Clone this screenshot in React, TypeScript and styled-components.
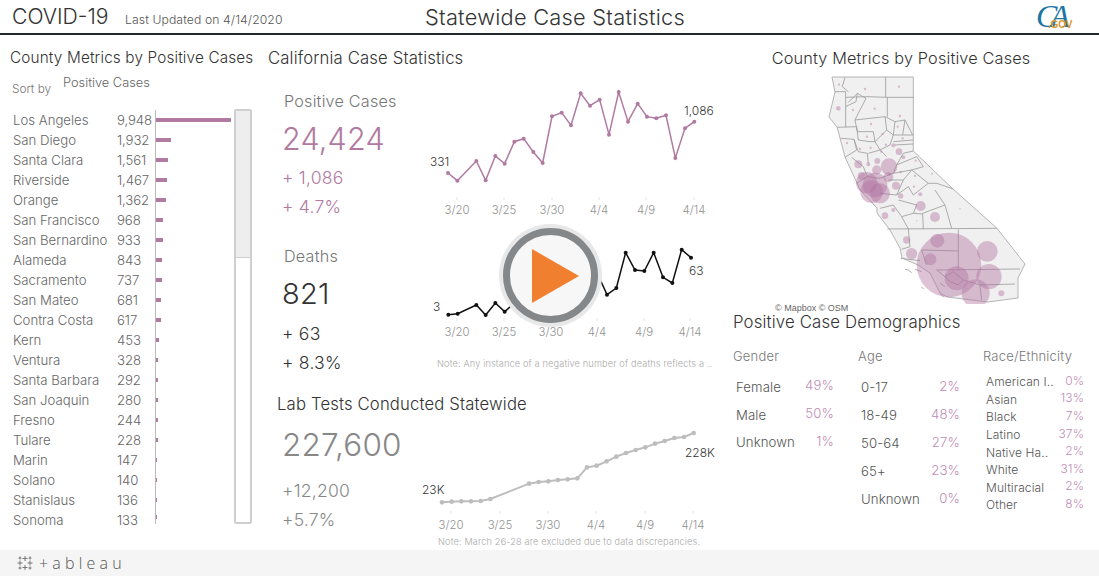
import React from "react";
import styled, { createGlobalStyle } from "styled-components";

const Global = createGlobalStyle`
  html, body { margin: 0; padding: 0; background: #fff; }
  body { font-family: "Inter", "Open Sans", sans-serif; font-weight: 300; color: #444; overflow: hidden; }
`;

const PURPLE = "#b07aa1";
const counties: [string, number][] = [
  ["Los Angeles", 9948], ["San Diego", 1932], ["Santa Clara", 1561], ["Riverside", 1467], ["Orange", 1362],
  ["San Francisco", 968], ["San Bernardino", 933], ["Alameda", 843], ["Sacramento", 737], ["San Mateo", 681],
  ["Contra Costa", 617], ["Kern", 453], ["Ventura", 328], ["Santa Barbara", 292], ["San Joaquin", 280],
  ["Fresno", 244], ["Tulare", 228], ["Marin", 147], ["Solano", 140], ["Stanislaus", 136], ["Sonoma", 133],
];

const Page = styled.div`
  position: relative; width: 1099px; height: 576px; display: flex; flex-direction: column; overflow: hidden;
`;
const Header = styled.header`
  height: 33px; border-bottom: 2px solid #23262b; display: flex; align-items: center; padding-left: 12px;
`;
const Brand = styled.h1`
  margin: 0; width: 113px; font-size: 21.2px; font-weight: 300; color: #333; line-height: 33px;
`;
const Updated = styled.span`
  font-size: 12.2px; color: #555; padding-top: 6px; width: 265px; letter-spacing: 0.1px; white-space: nowrap;
`;
const PageTitle = styled.h2`
  margin: 0; width: 330px; text-align: center; font-size: 21.8px; font-weight: 300; color: #333; letter-spacing: 0.25px; white-space: nowrap;
`;
const Logo = styled.div`
  margin-left: 315px; width: 42px; height: 33px; position: relative; font-family: "Liberation Serif", serif;
`;
const LogoCA = styled.span`
  position: absolute; left: 1px; top: 0; font-size: 32px; line-height: 33px; font-style: italic; color: #1c75a3; letter-spacing: -7px;
`;
const LogoGov = styled.span`
  position: absolute; left: 13px; top: 20px; font-family: "Liberation Sans", sans-serif; font-size: 10px; line-height: 9px; font-weight: 700; color: #dc962e; letter-spacing: -0.2px;
`;
const Body = styled.main`
  flex: 1; display: grid; grid-template-columns: 268px 452px 379px; min-height: 0;
`;
const Footer = styled.footer`
  height: 26px; background: #f5f5f5; display: flex; align-items: center; padding-left: 17px; gap: 6px;
`;
const FooterText = styled.span`
  font-size: 16px; letter-spacing: 4.2px; line-height: 26px; font-weight: 300; color: #555; font-family: "Open Sans", sans-serif;
`;
const SectionTitle = styled.h3<{ $inset?: number; $center?: boolean; $size: number }>`
  margin: 0; height: 18px; line-height: 18px; font-size: ${(p) => p.$size}px; font-weight: 300; color: #333; white-space: nowrap;
  padding-left: ${(p) => p.$inset ?? 0}px; text-align: ${(p) => (p.$center ? "center" : "left")}; letter-spacing: 0.15px;
`;
const LeftCol = styled.section`
  padding: 14px 0 0 10px; min-width: 0;
`;
const SortRow = styled.div`
  height: 34px; margin-top: 8px; display: flex; padding-left: 2px; gap: 12px;
`;
const SortLabel = styled.span`
  font-size: 11.8px; color: #777; line-height: 16px; margin-top: 6px; width: 39px; white-space: nowrap;
`;
const SortValue = styled.span`
  font-size: 12.8px; color: #666; line-height: 16px; white-space: nowrap;
`;
const ListWrap = styled.div`
  display: flex; height: 415px;
`;
const List = styled.div`
  width: 224px; height: 415px; padding-top: 1px; box-sizing: border-box;
`;
const Row = styled.div`
  display: grid; grid-template-columns: 104px 38px 1fr; height: 20px; line-height: 20px; padding-left: 3px; font-size: 13.2px; color: #666; white-space: nowrap;
  &:last-child > div { height: 14px; }
`;
const Num = styled.span`
  letter-spacing: -0.1px;
`;
const BarCell = styled.div`
  border-left: 1px solid #bbb; display: flex; align-items: center; height: 20px;
`;
const Bar = styled.div`
  height: 4.5px; background: ${PURPLE};
`;
const Scroll = styled.div`
  width: 18px; height: 415px; box-sizing: border-box; border: 2px solid #cfcfcf; border-radius: 2px;
`;
const Thumb = styled.div`
  height: 146px; background: #eeeeee; border-bottom: 1px solid #cfcfcf;
`;
const MidCol = styled.section`
  padding-top: 14px; min-width: 0; display: flex; flex-direction: column;
`;
const ChartRow = styled.div<{ $h: number; $mt?: number }>`
  display: grid; grid-template-columns: 152px 300px; height: ${(p) => p.$h}px; margin-top: ${(p) => p.$mt ?? 0}px;
`;
const Kpi = styled.div<{ $pt: number; $pl: number }>`
  padding: ${(p) => p.$pt}px 0 0 ${(p) => p.$pl}px;
`;
const KpiLabel = styled.div`
  font-size: 16.2px; line-height: 20px; color: #777; letter-spacing: 0.2px; white-space: nowrap; padding-left: 2px;
`;
const KpiValue = styled.div<{ $color: string; $mt: number; $size: number }>`
  font-size: ${(p) => p.$size}px; line-height: 40px; color: ${(p) => p.$color}; margin-top: ${(p) => p.$mt}px; letter-spacing: 0.2px;
`;
const KpiDelta = styled.div<{ $color: string; $mt?: number }>`
  font-size: 17.6px; line-height: 29px; color: ${(p) => p.$color}; margin-top: ${(p) => p.$mt ?? 0}px; letter-spacing: 0.2px;
`;
const ChartCol = styled.div`
  display: flex; flex-direction: column;
`;
const ChartSvg = styled.svg`
  display: block; width: 300px; flex: none;
`;
const Note = styled.div<{ $mt: number; $pl: number }>`
  font-size: 9.2px; line-height: 14px; color: #aaa; margin-top: ${(p) => p.$mt}px; padding-left: ${(p) => p.$pl}px; white-space: nowrap; letter-spacing: 0.14px;
`;
const RightCol = styled.section`
  padding-top: 14px; min-width: 0;
`;
const MapSvg = styled.svg`
  display: block; width: 260px; height: 234px; margin: 3px 0 0 60px;
`;
const Attribution = styled.div`
  height: 9px; margin-left: 55px; font: 400 9px/9px "Liberation Sans", sans-serif; color: #666;
`;
const DemoGrid = styled.div`
  margin: 17px 0 0 13px; display: grid; grid-template-columns: 125px 125px 101px;
`;
const DemoHead = styled.div`
  font-size: 13px; line-height: 16px; color: #777; margin-bottom: 9px; letter-spacing: 0.2px; white-space: nowrap;
`;
const DemoRow = styled.div<{ $h: number; $small?: boolean; $w: number }>`
  display: flex; justify-content: space-between; align-items: center; height: ${(p) => p.$h}px; padding-left: 3px; width: ${(p) => p.$w}px;
  font-size: ${(p) => (p.$small ? 12 : 13.2)}px; color: #555; white-space: nowrap; letter-spacing: 0.1px;
`;
const Pct = styled.span`
  color: #c08db5; padding-bottom: 3px;
`;
const Play = styled.div`
  position: absolute; left: 499px; top: 224px; width: 103px; height: 103px; border-radius: 50%; background: #e8e8e8; display: flex; align-items: center; justify-content: center;
`;
const PlayRing = styled.div`
  width: 81px; height: 81px; border-radius: 50%; border: 7px solid #85888b; background: #f7f7f7; display: flex; align-items: center; justify-content: center;
`;

type Pt = [number, number];
const conv = (pts: Pt[], ox: number, oy: number): Pt[] => pts.map(([x, y]) => [x / 3 + ox, y / 3 + oy]);
const toStr = (pts: Pt[]) => pts.map((p) => p.join(",")).join(" ");

const posPts = conv([[84,309],[112,332],[169,273],[197,331],[226,258],[254,281],[283,215],[311,206],[340,246],[368,279],[396,139],[425,128],[453,166],[482,70],[510,107],[539,89],[567,194],[596,66],[624,155],[653,101],[681,140],[709,145],[738,136],[766,264],[795,175],[823,155]], 420, 70);
const deathPts = conv([[85,284],[113,281],[169,255],[197,285],[226,249],[254,275],[282,250],[310,260],[338,240],[366,220],[394,230],[422,200],[450,210],[478,190],[506,160],[534,165],[561,224],[589,204],[617,98],[645,150],[673,153],[701,98],[729,172],[757,189],[785,89],[813,113]], 420, 220);
const testPts = conv([[66,244],[95,242],[124,241],[153,241],[182,240],[211,234],[327,188],[356,183],[385,181],[414,177],[443,175],[472,172],[501,139],[530,134],[560,121],[589,107],[618,96],[647,87],[676,79],[705,68],[734,60],[763,51],[792,48],[821,36]], 420, 420);

const dates = ["3/20", "3/25", "3/30", "4/4", "4/9", "4/14"];

function LineChart(props: {
  vb: string; h: number; pts: Pt[]; color: string; sw: number; r: number; tickX: number[]; tickY: number; labelY: number;
  values: { x: number; y: number; t: string }[];
}) {
  return (
    <ChartSvg viewBox={props.vb} height={props.h} style={{ height: props.h }}>
      <polyline points={toStr(props.pts)} fill="none" stroke={props.color} strokeWidth={props.sw} />
      {props.pts.map((p, i) => <circle key={i} cx={p[0]} cy={p[1]} r={props.r} fill={props.color} />)}
      {props.tickX.map((x, i) => (
        <g key={i}>
          <line x1={x} x2={x} y1={props.tickY} y2={props.tickY + 3} stroke="#e3e3e3" />
          <text x={x} y={props.labelY} textAnchor="middle" fontSize="11.4" fill="#929292" fontFamily="Inter, sans-serif" fontWeight="300">{dates[i]}</text>
        </g>
      ))}
      {props.values.map((v) => (
        <text key={v.t} x={v.x} y={v.y} fontSize="12" fill="#333" fontFamily="Inter, sans-serif" fontWeight="300">{v.t}</text>
      ))}
    </ChartSvg>
  );
}

const smallDots: Pt[] = [[177,44],[255,57],[357,50],[219,120],[284,116],[360,138],[273,162],[353,170],[308,192],[261,200],[368,205],[201,219],[318,224],[240,237],[272,234],[304,245],[407,272],[362,306],[405,318],[402,350],[328,313]];
const bubbles4: [number, number, number][] = [[175,115,7],[340,226,6],[357,245,10],[370,262,6],[235,283,12],[265,283,6],[292,273,9],[327,290,25],[290,300,14],[325,322,15],[245,318,12],[260,338,32],[285,345,37],[275,365,34],[300,370,30],[348,347,12],[362,378,8],[421,373,6],[456,311,3]];
const bubbles5: [number, number, number][] = [[507,225,97],[622,184,31],[627,260,38],[587,310,42],[530,265,36],[451,208,18],[472,152,21],[395,191,17],[380,150,11],[465,81,15],[422,48,15],[315,77,10],[664,310,9],[540,56,2],[410,92,2],[340,60,6]];

const linesZ4 = [
  "317,20 317,82", "197,82 260,80 322,82 400,82", "195,22 187,50 205,65", "165,65 197,65 197,172",
  "205,97 232,70 258,85", "232,70 228,95 197,110", "322,82 322,140", "225,150 315,140 345,155 375,150 398,195",
  "172,172 230,170 235,210", "232,185 280,185 285,215 320,180 315,140", "235,210 270,215 285,215 300,240", "225,150 232,185",
  "340,195 400,195", "340,195 330,225 300,240", "340,215 400,210", "345,225 400,222", "400,243 370,250 350,285",
  "182,205 222,208 230,240 195,262", "222,208 235,245 262,250 265,280", "265,250 300,240 320,260",
  "350,285 410,260", "410,260 430,290 395,300 370,330", "395,300 445,340 400,375 385,350 350,375", "445,340 470,340 520,357",
  "230,340 262,320 300,325 340,310 350,285", "262,320 250,290 215,262", "340,310 395,300",
  "300,370 350,375 370,330 325,330", "258,85 240,120 225,150", "345,155 340,195", "320,180 340,195", "375,150 368,195",
];
const linesZ5 = [
  "322,117 650,115", "535,118 535,235", "425,180 535,183", "470,240 720,237", "600,285 705,282", "600,285 605,330",
  "430,118 428,70 495,45 515,115", "400,70 428,72", "300,55 340,45 365,80 385,117", "365,80 400,70 410,45 355,30", "495,45 465,0",
  "385,117 390,170 365,178", "425,180 440,225", "362,205 420,212", "495,260 520,245 550,270 535,285 510,275 495,260", "470,240 495,260", "550,270 600,285",
  "375,238 385,240 395,248", "405,238 425,245", "424,292 431,296", "480,280 495,290", "480,310 492,322",
];
const outline = "M832 77 L913.3 77 L913.3 151 L953 189 L996.7 228 L1025 264 L1018 278 L1018 298 L988 302 L947 297 L940 293 L930 273 L918 265 L902 258 L900 248 L890 230 L877 213 L877 208 L860 190 L857 183 L845 157 L840 138 L837 127 L829 117 L835 92 Z";

const CaMap = () => (
  <MapSvg viewBox="780 70 260 234">
    <path d={outline} fill="#f0f0f0" stroke="#b5b5b5" strokeWidth="1" />
    <g transform="translate(780 70) scale(0.3333)" fill="none" stroke="#a0a0a0" strokeWidth="2.6">
      {linesZ4.map((l) => <polyline key={l} points={l} />)}
    </g>
    <g transform="translate(780 190) scale(0.3333)" fill="none" stroke="#a0a0a0" strokeWidth="2.6">
      {linesZ5.map((l) => <polyline key={l} points={l} />)}
    </g>
    <g transform="translate(780 70) scale(0.3333)" fill="#b071a0" fillOpacity="0.42">
      {smallDots.map(([x, y]) => <circle key={`${x}-${y}`} cx={x} cy={y} r={3.5} />)}
      {bubbles4.map(([x, y, r]) => <circle key={`${x}-${y}`} cx={x} cy={y} r={r} />)}
    </g>
    <g transform="translate(780 190) scale(0.3333)" fill="#b071a0" fillOpacity="0.42">
      {bubbles5.map(([x, y, r]) => <circle key={`${x}-${y}`} cx={x} cy={y} r={r} />)}
    </g>
  </MapSvg>
);

const TableauMark = () => (
  <svg width="16" height="16" viewBox="0 0 16 16" stroke="#777" strokeWidth="1" fill="none">
    <path d="M8 1v5M5.500 3.500h5M8 10v5M5.500 12.500h5M3 5.500v5M.5 8h5M13 5.500v5M10.500 8h5M3 1.500v3M1.500 3h3M13 1.500v3M11.500 3h3M3 11.500v3M1.500 13h3M13 11.500v3M11.500 13h3" />
  </svg>
);

const gender: [string, string][] = [["Female", "49%"], ["Male", "50%"], ["Unknown", "1%"]];
const age: [string, string][] = [["0-17", "2%"], ["18-49", "48%"], ["50-64", "27%"], ["65+", "23%"], ["Unknown", "0%"]];
const race: [string, string][] = [["American I..", "0%"], ["Asian", "13%"], ["Black", "7%"], ["Latino", "37%"], ["Native Ha..", "2%"], ["White", "31%"], ["Multiracial", "2%"], ["Other", "8%"]];

export default function App() {
  return (
    <Page>
      <Global />
      <Header>
        <Brand>COVID-19</Brand>
        <Updated>Last Updated on 4/14/2020</Updated>
        <PageTitle>Statewide Case Statistics</PageTitle>
        <Logo><LogoCA>CA</LogoCA><LogoGov>.GOV</LogoGov></Logo>
      </Header>
      <Body>
        <LeftCol>
          <SectionTitle $size={15.3}>County Metrics by Positive Cases</SectionTitle>
          <SortRow><SortLabel>Sort by</SortLabel><SortValue>Positive Cases</SortValue></SortRow>
          <ListWrap>
            <List>
              {counties.map(([name, v]) => (
                <Row key={name}>
                  <span>{name}</span>
                  <Num>{v.toLocaleString("en-US")}</Num>
                  <BarCell><Bar style={{ width: (v / 9948) * 75 }} /></BarCell>
                </Row>
              ))}
            </List>
            <Scroll><Thumb /></Scroll>
          </ListWrap>
        </LeftCol>
        <MidCol>
          <SectionTitle $size={16.7}>California Case Statistics</SectionTitle>
          <ChartRow $h={167} $mt={3}>
            <Kpi $pt={21} $pl={14}>
              <KpiLabel>Positive Cases</KpiLabel>
              <KpiValue $color={PURPLE} $mt={8} $size={30.5}>24,424</KpiValue>
              <KpiDelta $color={PURPLE} $mt={4}>+ 1,086</KpiDelta>
              <KpiDelta $color={PURPLE}>+ 4.7%</KpiDelta>
            </Kpi>
            <ChartCol>
              <LineChart vb="420 70 300 150" h={150} pts={posPts} color={PURPLE} sw={1.5} r={2} tickX={[457,504,552,599,646,694]} tickY={197} labelY={214}
                values={[{ x: 430, y: 166, t: "331" }, { x: 684, y: 115, t: "1,086" }]} />
            </ChartCol>
          </ChartRow>
          <ChartRow $h={144}>
            <Kpi $pt={9} $pl={14}>
              <KpiLabel>Deaths</KpiLabel>
              <KpiValue $color="#333" $mt={8} $size={29}>821</KpiValue>
              <KpiDelta $color="#333" $mt={5}>+ 63</KpiDelta>
              <KpiDelta $color="#333">+ 8.3%</KpiDelta>
            </Kpi>
            <ChartCol>
              <LineChart vb="420 237 300 110" h={110} pts={deathPts} color="#111" sw={1.5} r={2} tickX={[457,504,551,597,644,690]} tickY={318} labelY={336}
                values={[{ x: 433, y: 311, t: "3" }, { x: 689, y: 275, t: "63" }]} />
              <Note $mt={10} $pl={17}>Note: Any instance of a negative number of deaths reflects a ..</Note>
            </ChartCol>
          </ChartRow>
          <SectionTitle $size={16.7} $inset={9} style={{ marginTop: 14 }}>Lab Tests Conducted Statewide</SectionTitle>
          <ChartRow $h={137}>
            <Kpi $pt={12} $pl={14}>
              <KpiValue $color="#888" $mt={0} $size={31.5}>227,600</KpiValue>
              <KpiDelta $color="#888" $mt={11}>+12,200</KpiDelta>
              <KpiDelta $color="#888">+5.7%</KpiDelta>
            </Kpi>
            <ChartCol>
              <LineChart vb="420 412 300 122" h={122} pts={testPts} color="#bdbdbd" sw={2} r={2.3} tickX={[451,500,548,596,645,693]} tickY={510} labelY={528}
                values={[{ x: 422, y: 493, t: "23K" }, { x: 685, y: 456, t: "228K" }]} />
              <Note $mt={0} $pl={18}>Note: March 26-28 are excluded due to data discrepancies.</Note>
            </ChartCol>
          </ChartRow>
        </MidCol>
        <RightCol>
          <SectionTitle $size={16.3} $center style={{ width: 362 }}>County Metrics by Positive Cases</SectionTitle>
          <CaMap />
          <Attribution>© Mapbox © OSM</Attribution>
          <SectionTitle $size={16.8} $inset={13}>Positive Case Demographics</SectionTitle>
          <DemoGrid>
            <div>
              <DemoHead>Gender</DemoHead>
              {gender.map(([n, p]) => <DemoRow key={n} $h={27.7} $w={98}><span>{n}</span><Pct>{p}</Pct></DemoRow>)}
            </div>
            <div>
              <DemoHead>Age</DemoHead>
              {age.map(([n, p]) => <DemoRow key={n} $h={28} $w={99}><span>{n}</span><Pct>{p}</Pct></DemoRow>)}
            </div>
            <div>
              <DemoHead>Race/Ethnicity</DemoHead>
              {race.map(([n, p]) => <DemoRow key={n} $h={17.6} $w={98} $small><span>{n}</span><Pct>{p}</Pct></DemoRow>)}
            </div>
          </DemoGrid>
        </RightCol>
      </Body>
      <Footer>
        <TableauMark />
        <FooterText>+ableau</FooterText>
      </Footer>
      <Play>
        <PlayRing>
          <svg width="47" height="54" viewBox="0 0 47 54" style={{ marginLeft: 10 }}>
            <path d="M0 0 L47 27 L0 54 Z" fill="#f08030" />
          </svg>
        </PlayRing>
      </Play>
    </Page>
  );
}
